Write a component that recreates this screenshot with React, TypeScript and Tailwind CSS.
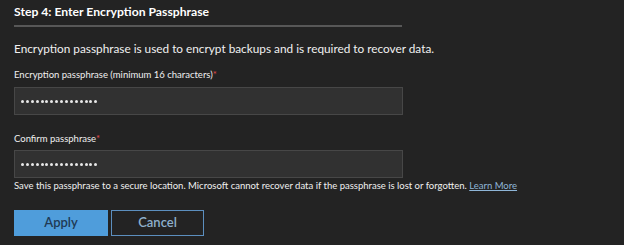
import React from "react";

const Dots = () => (
  <div className="flex items-center gap-[1.9px]">
    {Array.from({ length: 16 }).map((_, i) => (
      <span key={i} className="block h-[3px] w-[3px] rounded-full bg-[#e8e8e8]" />
    ))}
  </div>
);

const Field = () => (
  <div className="flex h-[28px] w-[389px] items-center border border-[#474747] bg-[#313131] pl-[6px]">
    <Dots />
  </div>
);

export default function App() {
  return (
    <div
      className="h-[245px] w-[624px] overflow-hidden bg-[#232323] pl-[14px] pt-[4px] text-[#f0f0f0]"
      style={{ fontFamily: 'Lato, "Noto Sans", sans-serif' }}
    >
      <h2 className="text-[12.2px] font-bold leading-[16px] text-white">Step 4: Enter Encryption Passphrase</h2>
      <div className="mt-[5px] h-[2px] w-[388px] bg-[#575757]" />
      <p className="mt-[14px] text-[11.8px] leading-[16px]">
        Encryption passphrase is used to encrypt backups and is required to recover data.
      </p>
      <div className="mt-[12px] text-[9.5px] leading-[12px]">
        Encryption passphrase (minimum 16 characters)<span className="text-[#e04a4a]">*</span>
      </div>
      <div className="mt-[6px]">
        <Field />
      </div>
      <div className="mt-[18px] text-[9.5px] leading-[12px]">
        Confirm passphrase<span className="text-[#e04a4a]">*</span>
      </div>
      <div className="mt-[5px]">
        <Field />
      </div>
      <div className="mt-[2px] text-[9.5px] leading-[12px]">
        Save this passphrase to a secure location. Microsoft cannot recover data if the passphrase is lost or forgotten.{" "}
        <a className="text-[#8fb6d8] underline">Learn More</a>
      </div>
      <div className="mt-[18px] flex gap-[3px]">
        <button className="h-[26px] w-[94px] bg-[#4f9ddb] text-[13px] font-semibold text-[#203a55]">Apply</button>
        <button className="h-[26px] w-[93px] border border-[#5c8fbf] text-[13px] font-semibold text-[#8fb0cc]">
          Cancel
        </button>
      </div>
    </div>
  );
}
